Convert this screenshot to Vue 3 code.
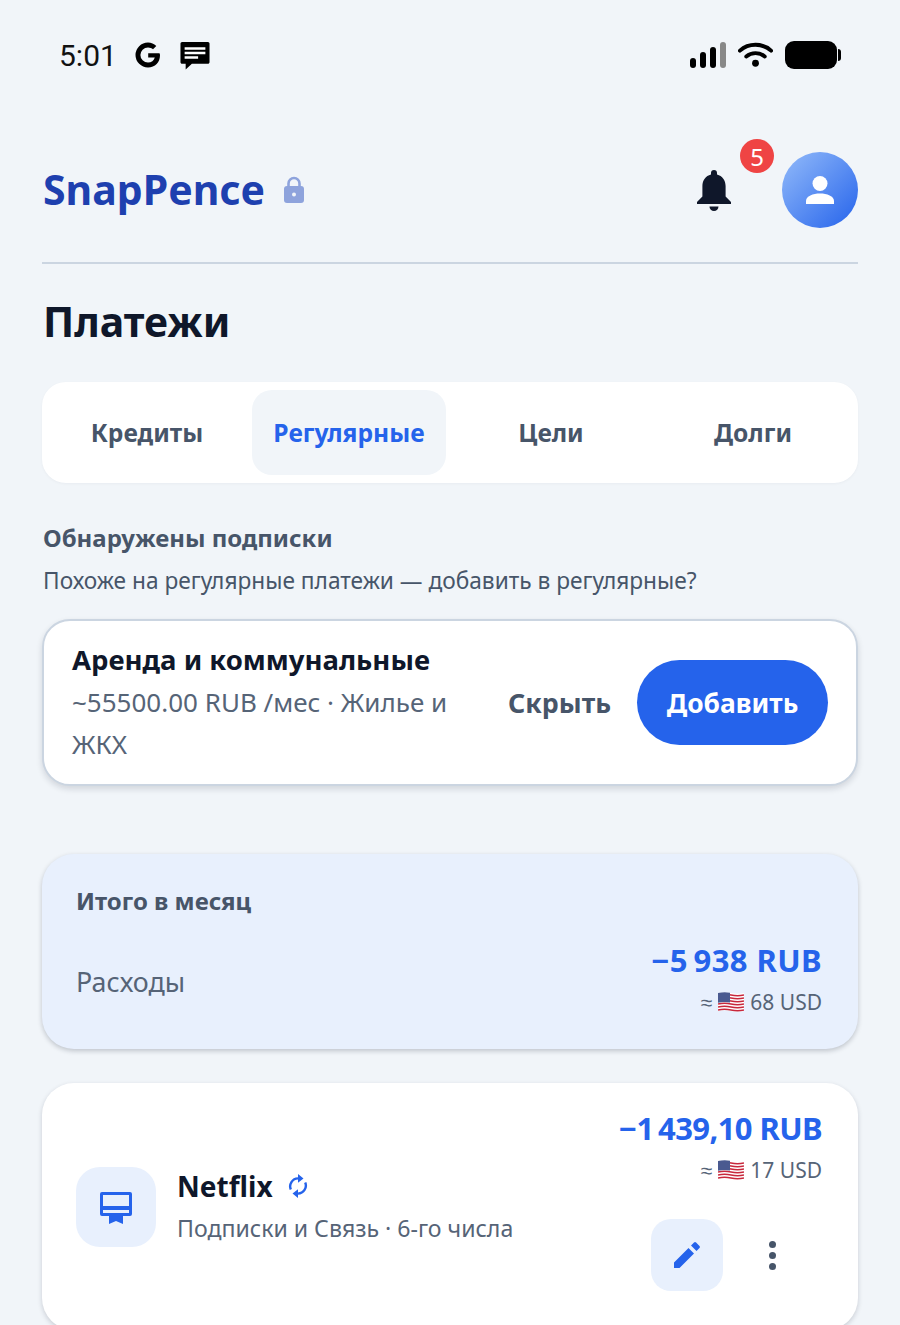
<script setup>
const tabs = [
  { label: 'Кредиты' },
  { label: 'Регулярные', active: true },
  { label: 'Цели' },
  { label: 'Долги' },
]

// wavy stripes of the flag emoji
const stripes = [3, 6, 9, 12, 15, 18].map((y) => `M0 ${y}Q6.5 ${y - 1.6} 13 ${y}T26 ${y}`)
</script>

<template>
  <div class="screen">
    <div class="status">
      <div class="status-left">
        <span class="time">5:01</span>
        <svg class="g-icon" width="28" height="28" viewBox="0 0 28 28">
          <path d="M25.5 12.2H14.2v4.4h6.6c-.8 3-3.400 5-6.800 5a7.600 7.600 0 0 1 0-15.200c2 0 3.700.7 5 1.900l3.300-3.300A12.200 12.200 0 0 0 14 1.500a12.500 12.500 0 1 0 0 25c7.200 0 12-5 12-12.200 0-.7-.2-1.500-.5-2.100z" fill="#000"/>
        </svg>
        <svg class="msg-icon" width="30" height="28" viewBox="1 1 28 27">
          <path d="M2.500 1h25c.8 0 1.500.7 1.500 1.500v18c0 .8-.7 1.500-1.500 1.500H12l-6 5.500V22H2.500C1.700 22 1 21.300 1 20.500v-18C1 1.700 1.700 1 2.500 1z" fill="#000"/>
          <path d="M5 6h20v2.400H5zM5 10.400h20v2.400H5zM5 14.800h13v2.400H5z" fill="#fff"/>
        </svg>
      </div>
      <div class="status-right">
        <svg width="36" height="28" viewBox="0 0 36 28">
          <rect x="0" y="17" width="6" height="10" rx="3" fill="#000"/>
          <rect x="10" y="11" width="6" height="16" rx="3" fill="#000"/>
          <rect x="20" y="6" width="6" height="21" rx="3" fill="#000"/>
          <rect x="30" y="1" width="6" height="26" rx="3" fill="#888"/>
        </svg>
        <svg width="35" height="28" viewBox="0 0 36 28">
          <path d="M2 9.500C11 1.500 25 1.500 34 9.500M8.500 15.500c5.500-4.500 13.500-4.500 19 0" fill="none" stroke="#000" stroke-width="4" stroke-linecap="round"/>
          <circle cx="18" cy="22.500" r="3.500" fill="#000"/>
        </svg>
        <div class="battery">
          <div class="battery-body"></div>
          <div class="battery-tip"></div>
        </div>
      </div>
    </div>

    <header class="app-head">
      <div class="brand">
        <span class="brand-name">SnapPence</span>
        <svg width="22" height="28" viewBox="0 0 22 28">
          <path d="M5.500 11V7.500a5.500 5.500 0 0 1 11 0V11" fill="none" stroke="#8ea3dc" stroke-width="2.600"/>
          <rect x="1" y="10" width="20" height="17" rx="3" fill="#8ea3dc"/>
          <circle cx="11" cy="18.500" r="2" fill="#f1f5f9"/>
        </svg>
      </div>
      <div class="head-actions">
        <div class="bell-wrap">
          <svg width="36" height="44" viewBox="0 0 36 44">
            <path d="M18 1a3 3 0 0 1 3 3v1.400c5.400 1.300 8.600 6 8.600 11.600v10.500L35 33v2H1v-2l5.400-5.500V17c0-5.600 3.200-10.300 8.600-11.600V4a3 3 0 0 1 3-3z" fill="#0f172a"/>
            <path d="M13.500 37.500h9a4.500 4.500 0 0 1-9 0z" fill="#0f172a"/>
          </svg>
          <span class="badge">5</span>
        </div>
        <div class="avatar">
          <svg width="32" height="32" viewBox="0 0 32 32">
            <circle cx="16" cy="9.500" r="7.500" fill="#fff"/>
            <path d="M2 30v-3c0-5 7-7.500 14-7.500S30 22 30 27v3z" fill="#fff"/>
          </svg>
        </div>
      </div>
    </header>

    <main class="content">
      <h1 class="page-title">Платежи</h1>

      <nav class="tabs">
        <div v-for="t in tabs" :key="t.label" class="tab" :class="{ active: t.active }">{{ t.label }}</div>
      </nav>

      <h2 class="section-title">Обнаружены подписки</h2>
      <p class="section-sub">Похоже на регулярные платежи — добавить в регулярные?</p>

      <section class="detected">
        <div class="detected-info">
          <div class="detected-title">Аренда и коммунальные</div>
          <div class="detected-sub">~55500.00 RUB /мес · Жилье и ЖКХ</div>
        </div>
        <span class="hide-btn">Скрыть</span>
        <span class="add-btn">Добавить</span>
      </section>

      <section class="summary">
        <div class="summary-title">Итого в месяц</div>
        <div class="summary-row">
          <span class="summary-label">Расходы</span>
          <div class="amounts">
            <div class="amount">−5&#8201;938 RUB</div>
            <div class="converted">≈
              <svg class="flag" width="26" height="20" viewBox="0 0 26 20">
                <path d="M0 1Q6.500-.6 13 1T26 1V19Q19.500 20.600 13 19T0 19z" fill="#fff"/>
                <path v-for="d in stripes" :key="d" :d="d" fill="none" stroke="#c8283c" stroke-width="1.500"/>
                <path d="M0 1Q6 -.4 12 .7V10.500Q6 9.500 0 10.800z" fill="#4a5a90"/>
              </svg>
              68 USD</div>
          </div>
        </div>
      </section>

      <section class="payment">
        <div class="pay-icon">
          <svg width="34" height="34" viewBox="0 0 34 34">
            <path d="M3 2h28a2 2 0 0 1 2 2v20a2 2 0 0 1-2 2H3a2 2 0 0 1-2-2V4a2 2 0 0 1 2-2zm1 3v11h26V5zm0 15v3h26v-3z" fill="#2563eb" fill-rule="evenodd"/>
            <path d="M10 26h14v8l-7-3-7 3z" fill="#2563eb"/>
          </svg>
        </div>
        <div class="pay-info">
          <div class="pay-name">
            <span>Netflix</span>
            <svg width="20" height="24" viewBox="0 0 20 24">
              <path d="M2.800 15.500A8 8 0 0 1 10 4.400M17.200 8.500A8 8 0 0 1 10 19.600" fill="none" stroke="#2563eb" stroke-width="2.400"/>
              <path d="M10 0l5.500 4.400L10 8.800zM10 15.200v8.800l-5.500-4.400z" fill="#2563eb"/>
            </svg>
          </div>
          <div class="pay-sub">Подписки и Связь · 6-го числа</div>
        </div>
        <div class="pay-right">
          <div class="amount">−1&#8201;439,10 RUB</div>
          <div class="converted">≈
            <svg class="flag" width="26" height="20" viewBox="0 0 26 20">
              <path d="M0 1Q6.500-.6 13 1T26 1V19Q19.500 20.600 13 19T0 19z" fill="#fff"/>
              <path v-for="d in stripes" :key="d" :d="d" fill="none" stroke="#c8283c" stroke-width="1.500"/>
              <path d="M0 1Q6 -.4 12 .7V10.500Q6 9.500 0 10.800z" fill="#4a5a90"/>
            </svg>
            17 USD</div>
          <div class="pay-actions">
            <div class="edit-btn">
              <svg width="28" height="28" viewBox="0 0 28 28">
                <path d="M1 21.500V27h5.500L21 12.500 15.500 7zM26.500 7a1.500 1.500 0 0 0 0-2.100L23.100 1.500a1.500 1.500 0 0 0-2.100 0L18 4.500 23.500 10z" fill="#2563eb"/>
              </svg>
            </div>
            <div class="more">
              <i></i><i></i><i></i>
            </div>
          </div>
        </div>
      </section>
    </main>
  </div>
</template>

<style scoped>
.screen {
  width: 900px;
  height: 1325px;
  overflow: hidden;
  background: #f1f5f9;
  font-family: "Noto Sans", "Liberation Sans", sans-serif;
  color: #0f172a;
}

.status {
  height: 110px;
  display: flex;
  align-items: center;
  justify-content: space-between;
  padding: 0 59px 0 59px;
  box-sizing: border-box;
}

.status-left,
.status-right {
  display: flex;
  align-items: center;
}

.time {
  font-family: Roboto, sans-serif;
  font-size: 30px;
  color: #111;
  margin-right: 17px;
}

.msg-icon {
  margin: 2px 0 0 18px;
}

.status-right {
  gap: 12px;
}

.battery {
  display: flex;
  align-items: center;
  gap: 1px;
}

.battery-body {
  width: 52px;
  height: 28px;
  border-radius: 9px;
  background: #000;
}

.battery-tip {
  width: 3px;
  height: 12px;
  border-radius: 0 3px 3px 0;
  background: #000;
}

.app-head {
  margin: 0 42px;
  padding-top: 42px;
  height: 154px;
  box-sizing: border-box;
  display: flex;
  align-items: flex-start;
  justify-content: space-between;
  border-bottom: 2px solid #cbd5e1;
}

.brand {
  display: flex;
  align-items: center;
  gap: 18px;
  height: 76px;
  padding-left: 1px;
}

.brand-name {
  font-size: 41px;
  line-height: 56px;
  margin-top: -2px;
  font-weight: 700;
  color: #1e40af;
}

.head-actions {
  display: flex;
  align-items: flex-start;
}

.bell-wrap {
  position: relative;
  width: 36px;
  height: 76px;
  margin-right: 50px;
  display: flex;
  align-items: center;
}

.bell-wrap svg {
  margin-top: 2px;
}

.badge {
  position: absolute;
  left: 44px;
  top: -13px;
  width: 34px;
  height: 34px;
  border-radius: 50%;
  background: #ef4444;
  color: #fff;
  font-size: 24px;
  display: flex;
  align-items: center;
  justify-content: center;
}

.avatar {
  width: 76px;
  height: 76px;
  border-radius: 50%;
  background: linear-gradient(135deg, #93bbfa, #2563eb);
  display: flex;
  align-items: center;
  justify-content: center;
}

.content {
  padding: 0 42px;
}

.page-title {
  margin: 30px 0 34px;
  padding-left: 1px;
  font-size: 41px;
  line-height: 54px;
  font-weight: 700;
}

.tabs {
  background: #fff;
  border-radius: 24px;
  padding: 8px;
  display: grid;
  grid-template-columns: repeat(4, 1fr);
  gap: 8px;
  box-shadow: 0 1px 3px rgba(15, 23, 42, 0.04);
}

.tab {
  height: 85px;
  border-radius: 20px;
  display: flex;
  align-items: center;
  justify-content: center;
  font-size: 24.6px;
  font-weight: 700;
  color: #475569;
}

.tab.active {
  background: #f1f5f9;
  color: #2563eb;
}

.section-title {
  margin: 37px 0 0;
  padding-left: 1px;
  font-size: 24px;
  line-height: 36px;
  font-weight: 700;
  color: #475569;
}

.section-sub {
  margin: 7px 0 0;
  padding-left: 1px;
  font-size: 22.7px;
  line-height: 36px;
  color: #475569;
}

.detected {
  margin-top: 20px;
  height: 167px;
  box-sizing: border-box;
  background: #fff;
  border: 2px solid #cbd5e1;
  border-radius: 28px;
  box-shadow: 0 3px 6px rgba(15, 23, 42, 0.14);
  padding: 0 28px;
  display: flex;
  align-items: center;
}

.detected-info {
  flex: 1;
  min-width: 0;
  padding-right: 46px;
}

.detected-title {
  font-size: 27.5px;
  line-height: 38px;
  font-weight: 700;
}

.detected-sub {
  font-size: 26px;
  line-height: 42px;
  color: #566477;
  margin-top: 2px;
}

.hide-btn {
  font-size: 26.8px;
  font-weight: 700;
  color: #475569;
  margin-right: 26px;
}

.add-btn {
  width: 191px;
  height: 85px;
  flex: none;
  border-radius: 43px;
  background: #2563eb;
  color: #fff;
  font-size: 26.4px;
  font-weight: 700;
  display: flex;
  align-items: center;
  justify-content: center;
}

.summary {
  margin-top: 68px;
  height: 195px;
  box-sizing: border-box;
  background: #e8f0fd;
  border-radius: 32px;
  box-shadow: 0 2px 5px rgba(15, 23, 42, 0.22);
  padding: 29px 36px 0 34px;
}

.summary-title {
  font-size: 24px;
  line-height: 36px;
  font-weight: 700;
  color: #475569;
}

.summary-row {
  display: flex;
  align-items: center;
  justify-content: space-between;
  margin-top: 20px;
}

.summary-label {
  font-size: 26.8px;
  color: #566477;
}

.amounts {
  text-align: right;
}

.amount {
  font-size: 31px;
  line-height: 42px;
  font-weight: 700;
  color: #2563eb;
  white-space: nowrap;
}

.amounts .amount {
  letter-spacing: 0.4px;
}

.pay-right .amount {
  letter-spacing: -0.6px;
}

.converted {
  font-size: 21px;
  line-height: 42px;
  color: #566477;
  white-space: nowrap;
  display: flex;
  align-items: center;
  justify-content: flex-end;
  gap: 6px;
}

.payment {
  margin-top: 34px;
  height: 247px;
  box-sizing: border-box;
  background: #fff;
  border-radius: 32px;
  box-shadow: 0 2px 5px rgba(15, 23, 42, 0.18);
  padding: 24px 36px 0 34px;
  display: flex;
  align-items: flex-start;
}

.pay-icon {
  width: 80px;
  height: 80px;
  margin-top: 60px;
  border-radius: 24px;
  background: #e8f0fd;
  display: flex;
  align-items: center;
  justify-content: center;
  flex: none;
}

.pay-info {
  margin-left: 21px;
  margin-top: 58px;
  flex: 1;
}

.pay-name {
  display: flex;
  align-items: center;
  gap: 15px;
  font-size: 28px;
  line-height: 42px;
  font-weight: 700;
}

.pay-sub {
  margin-top: 3px;
  font-size: 23.1px;
  line-height: 36px;
  color: #566477;
}

.pay-right {
  display: flex;
  flex-direction: column;
  align-items: flex-end;
}

.pay-actions {
  display: flex;
  align-items: center;
  margin-top: 28px;
}

.edit-btn {
  width: 72px;
  height: 72px;
  border-radius: 20px;
  background: #e8f0fd;
  display: flex;
  align-items: center;
  justify-content: center;
}

.more {
  width: 99px;
  display: flex;
  flex-direction: column;
  align-items: center;
  gap: 4px;
}

.more i {
  width: 7px;
  height: 7px;
  border-radius: 50%;
  background: #475569;
}
</style>

<style>
html, body {
  margin: 0;
  background: #f1f5f9;
}
</style>
